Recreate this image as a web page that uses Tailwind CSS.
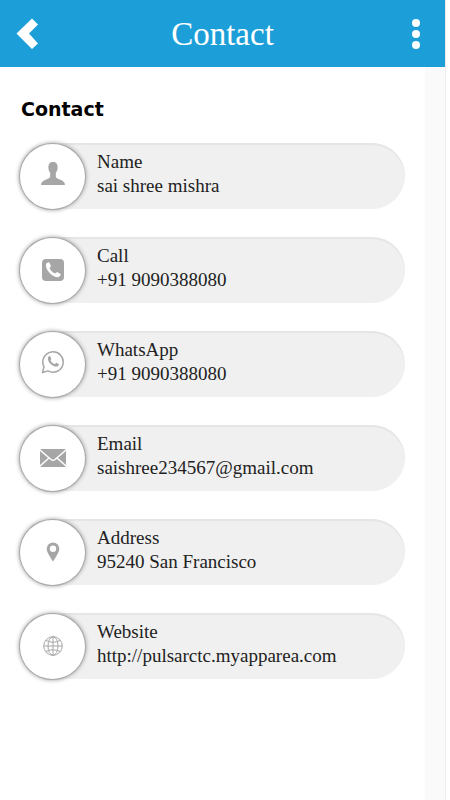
<!DOCTYPE html>
<html lang="en">
<head>
<meta charset="utf-8">
<meta name="viewport" content="width=device-width, initial-scale=1">
<title>Contact</title>
<script src="https://cdn.jsdelivr.net/npm/@tailwindcss/browser@4"></script>
</head>
<body class="bg-white font-[Georgia,'Liberation_Serif',serif] text-[#222]">
<div class="mr-1 flex min-h-screen flex-col border-r border-[#ececec]">
  <header class="flex h-[67px] items-center justify-between bg-[#1c9fd9] px-4 text-white">
    <button type="button" aria-label="Back" class="h-8 w-6">
      <svg viewBox="0 0 24 32" class="h-8 w-6 fill-current"><path d="M16 0.500L22 6.500L13 15.500L22 25.500L16 31L0.500 15.500Z"/></svg>
    </button>
    <h1 class="text-[33px] leading-10">Contact</h1>
    <button type="button" aria-label="More options" class="flex h-8 w-6 items-center justify-center">
      <svg viewBox="0 0 24 32" class="h-8 w-6 fill-current"><circle cx="11" cy="5" r="4"/><circle cx="11" cy="16" r="4"/><circle cx="11" cy="27" r="4"/></svg>
    </button>
  </header>
  <main class="mr-5 flex-1 px-5 pt-7 shadow-[20px_0_0_#fafafa]">
    <h2 class="pl-px font-['DejaVu_Sans',sans-serif] text-[19px] leading-7 font-bold text-black">Contact</h2>
    <ul class="mt-5 flex flex-col gap-7 text-[19px] leading-6">
      <li class="flex h-[66px] items-center gap-3 rounded-full bg-[#f0f0f0] shadow-[inset_0_2px_1px_#e5e5e5]">
        <span class="flex size-[65px] shrink-0 items-center justify-center rounded-full bg-white shadow-[0_0_0_1px_#aaa,0_0_4px_1px_#999]">
          <svg viewBox="0 0 26 26" class="mb-1 size-[26px] fill-[#a6a6a6]"><path d="M13 1c3 0 4.800 2 4.600 5.500 0 2.500-.8 4-1.800 5.500v3.500c0 1.500 2 2.200 4.500 3.200S25 21 25 24H1c0-3 2.200-4.300 4.700-5.300s4.500-1.700 4.500-3.200V12C9.200 10.500 8.400 9 8.400 6.500 8.200 3 10 1 13 1z"/></svg>
        </span>
        <div class="pb-1"><p>Name</p><p>sai shree mishra</p></div>
      </li>
      <li class="flex h-[66px] items-center gap-3 rounded-full bg-[#f0f0f0] shadow-[inset_0_2px_1px_#e5e5e5]">
        <span class="flex size-[65px] shrink-0 items-center justify-center rounded-full bg-white shadow-[0_0_0_1px_#aaa,0_0_4px_1px_#999]">
          <svg viewBox="0 0 22 22" class="size-[22px]"><rect width="22" height="22" rx="4" fill="#a6a6a6"/><path fill="#fff" d="M6.500 3.300L4.200 4.500C2.500 10.500 10.500 18.700 16.500 18.300L18.600 16.200C18.800 15.300 18.500 14.800 17.800 14.400L15.200 13.100L13 14.500C10.500 13.500 8.500 11.600 7.500 9L9 7.300L7.800 4.200Q7.400 3.200 6.500 3.300z"/></svg>
        </span>
        <div class="pb-1"><p>Call</p><p>+91 9090388080</p></div>
      </li>
      <li class="flex h-[66px] items-center gap-3 rounded-full bg-[#f0f0f0] shadow-[inset_0_2px_1px_#e5e5e5]">
        <span class="flex size-[65px] shrink-0 items-center justify-center rounded-full bg-white shadow-[0_0_0_1px_#aaa,0_0_4px_1px_#999]">
          <svg viewBox="0 0 24 24" class="mb-1 size-6"><path fill="none" stroke="#a6a6a6" stroke-width="1.500" stroke-linejoin="round" d="M1.500 22.500L3 16.800A10.200 10.200 0 1 1 7 20.900z"/><path fill="#a6a6a6" d="M8.500 6L7 7.200C5.800 11.500 12 17.500 16.500 16.500L18 15L17.600 14L15.200 12.800L13.800 14.200C11.800 13.400 10.400 12 9.500 10.200L10.400 9L9.400 6.400Q9.100 5.900 8.500 6z"/></svg>
        </span>
        <div class="pb-1"><p>WhatsApp</p><p>+91 9090388080</p></div>
      </li>
      <li class="flex h-[66px] items-center gap-3 rounded-full bg-[#f0f0f0] shadow-[inset_0_2px_1px_#e5e5e5]">
        <span class="flex size-[65px] shrink-0 items-center justify-center rounded-full bg-white shadow-[0_0_0_1px_#aaa,0_0_4px_1px_#999]">
          <svg viewBox="0 0 26 18" class="h-[18px] w-[26px]"><rect width="26" height="18" rx="1.500" fill="#a6a6a6"/><path fill="none" stroke="#fff" stroke-width="1.400" d="M0 1L11 10.500Q13 12 15 10.500L26 1M0 17L9 9M26 17L17 9"/></svg>
        </span>
        <div class="pb-1"><p>Email</p><p>saishree234567@gmail.com</p></div>
      </li>
      <li class="flex h-[66px] items-center gap-3 rounded-full bg-[#f0f0f0] shadow-[inset_0_2px_1px_#e5e5e5]">
        <span class="flex size-[65px] shrink-0 items-center justify-center rounded-full bg-white shadow-[0_0_0_1px_#aaa,0_0_4px_1px_#999]">
          <svg viewBox="0 0 14 20" class="h-5 w-3.5 fill-[#a6a6a6]"><path fill-rule="evenodd" d="M7 0.500a6.300 6.300 0 0 1 6.300 6.300C13.300 10 10 15 7 19.500C4 15 0.700 10 0.700 6.800A6.300 6.300 0 0 1 7 0.500zM7 3.600a3.200 3.200 0 1 0 0 6.400a3.200 3.200 0 0 0 0-6.400z"/></svg>
        </span>
        <div class="pb-1"><p>Address</p><p>95240 San Francisco</p></div>
      </li>
      <li class="flex h-[66px] items-center gap-3 rounded-full bg-[#f0f0f0] shadow-[inset_0_2px_1px_#e5e5e5]">
        <span class="flex size-[65px] shrink-0 items-center justify-center rounded-full bg-white shadow-[0_0_0_1px_#aaa,0_0_4px_1px_#999]">
          <svg viewBox="0 0 20 20" class="size-5 fill-none stroke-[#a6a6a6]"><circle cx="10" cy="10" r="9.300"/><ellipse cx="10" cy="10" rx="5" ry="9.300"/><path d="M10 1v18M1 10h18M3 4.500Q10 8 17 4.500M3 15.500Q10 12 17 15.500"/></svg>
        </span>
        <div class="pb-1"><p>Website</p><p><a href="http://pulsarctc.myapparea.com">http://pulsarctc.myapparea.com</a></p></div>
      </li>
    </ul>
  </main>
</div>
</body>
</html></script>
